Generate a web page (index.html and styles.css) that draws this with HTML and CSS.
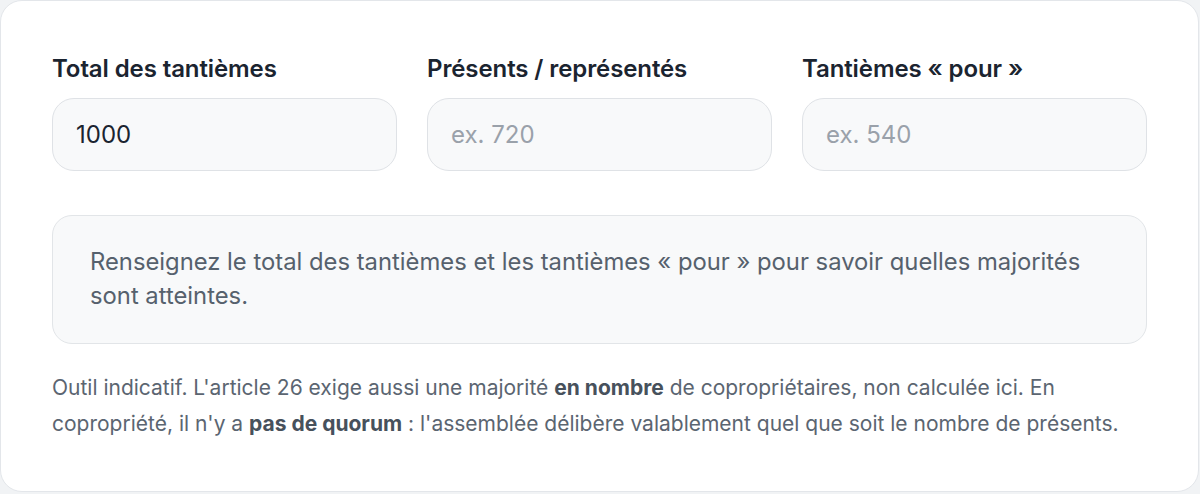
FILE: index.html
```html
<!DOCTYPE html>
<html lang="fr">
<head>
    <meta charset="UTF-8">
    <meta name="viewport" content="width=device-width, initial-scale=1.0">
    <title>Calculateur de majorités</title>
    <link rel="stylesheet" href="styles.css">
</head>
<body>
    <div class="card">
        <div class="fields">
            <div class="field">
                <label for="total">Total des tantièmes</label>
                <input type="text" id="total" value="1000">
            </div>
            <div class="field">
                <label for="presents">Présents / représentés</label>
                <input type="text" id="presents" placeholder="ex. 720">
            </div>
            <div class="field">
                <label for="pour">Tantièmes « pour »</label>
                <input type="text" id="pour" placeholder="ex. 540">
            </div>
        </div>

        <div class="result">
            Renseignez le total des tantièmes et les tantièmes « pour » pour savoir quelles majorités sont atteintes.
        </div>

        <p class="note">
            Outil indicatif. L'article 26 exige aussi une majorité <strong>en nombre</strong> de copropriétaires, non calculée ici. En copropriété, il n'y a <strong>pas de quorum</strong> : l'assemblée délibère valablement quel que soit le nombre de présents.
        </p>
    </div>
</body>
</html>
```

FILE: styles.css
```css
* {
    margin: 0;
    padding: 0;
    box-sizing: border-box;
}

html, body {
    background: #f1f3f5;
}

body {
    font-family: Inter, "Liberation Sans", sans-serif;
    color: #1b2430;
}

.card {
    width: 1199px;
    height: 492px;
    background: #fff;
    border: 1px solid #e3e6ea;
    border-radius: 22px;
    padding: 53px 51px 0 51px;
}

.fields {
    display: grid;
    grid-template-columns: repeat(3, 1fr);
    gap: 30px;
}

.field label {
    display: block;
    font-size: 24px;
    font-weight: 600;
    line-height: 30px;
    margin-bottom: 14px;
    letter-spacing: -0.1px;
}

.field input {
    width: 100%;
    height: 73px;
    padding: 0 23px;
    background: #f8f9fa;
    border: 1px solid #dfe2e6;
    border-radius: 22px;
    font-family: inherit;
    font-size: 24px;
    color: #1b2430;
    outline: none;
}

.field input::placeholder {
    color: #9aa1aa;
}

.result {
    margin-top: 44px;
    height: 129px;
    padding: 29px 37px;
    background: #f8f9fa;
    border: 1px solid #e2e5e8;
    border-radius: 20px;
    font-size: 23.8px;
    line-height: 34px;
    color: #56616d;
}

.note {
    margin-top: 26px;
    font-size: 21px;
    line-height: 36px;
    color: #5b6571;
}

.note strong {
    color: #47515c;
    font-weight: 700;
}
```
